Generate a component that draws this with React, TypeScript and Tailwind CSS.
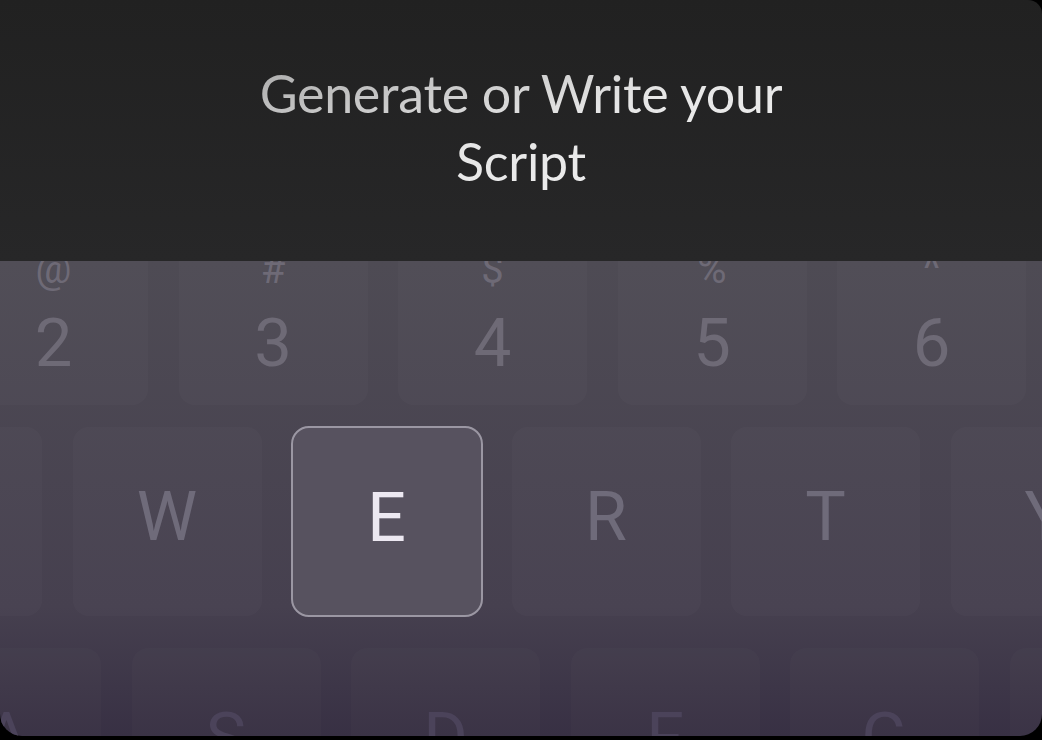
import React from 'react'

const row1 = [
    { sym: '@', num: '2' },
    { sym: '#', num: '3' },
    { sym: '$', num: '4' },
    { sym: '%', num: '5' },
    { sym: '^', num: '6' },
]
const row2 = ['Q', 'W', 'E', 'R', 'T', 'Y']
const row3 = ['A', 'S', 'D', 'F', 'G', 'H']

export default function App() {
    return (
        <div className="w-[1042px] h-[740px] bg-black">
            <div className="h-[736px] flex flex-col overflow-hidden rounded-b-[22px] rounded-tr-[14px]">
                {/* title */}
                <div className="h-[261px] shrink-0 flex items-center justify-center bg-linear-to-b from-[#212121] to-[#272728] relative z-10">
                    <h1
                        className="text-center text-[52px] leading-[68px] font-normal tracking-[-0.3px] pb-[8px] bg-linear-to-br from-[#a9a9a9] via-[#e6e6e6] to-[#f2f2f2] bg-clip-text text-transparent"
                        style={{ fontFamily: 'Lato, "Open Sans", sans-serif' }}
                    >
                        Generate or Write your
                        <br />
                        Script
                    </h1>
                </div>

                {/* keyboard */}
                <div
                    className="flex-1 flex flex-col bg-linear-to-b from-[#4e4b54] via-[#46404f] via-60% to-[#2d243b]"
                    style={{ fontFamily: 'Roboto, "Noto Sans", sans-serif' }}
                >
                    <div className="flex gap-[30.5px] ml-[-41px] mt-[-45px]">
                        {row1.map((k) => (
                            <div key={k.num} className="w-[189px] h-[189px] shrink-0 rounded-[16px] bg-white/[0.018] flex flex-col items-center pt-[32px] text-[#6e6a76]">
                                <span className="text-[40px] leading-[44px]">{k.sym}</span>
                                <span className="text-[67px] leading-[70px] mt-[16px]">{k.num}</span>
                            </div>
                        ))}
                    </div>

                    <div className="flex gap-[30.5px] ml-[-147px] mt-[22px]">
                        {row2.map((l) =>
                            l === 'E' ? (
                                <div key={l} className="w-[192px] h-[191px] -mx-[1.5px] -my-[1px] shrink-0 rounded-[18px] bg-[#57525f] border-2 border-[#9b97a3] flex items-center justify-center pb-[8px] text-[#ece8f1] text-[68px] leading-none">
                                    {l}
                                </div>
                            ) : (
                                <div key={l} className="w-[189px] h-[189px] shrink-0 rounded-[16px] bg-white/[0.018] flex items-center justify-center pb-[10px] text-[#6f6b7a] text-[68px] leading-none">
                                    {l}
                                </div>
                            )
                        )}
                    </div>

                    <div className="flex gap-[30.5px] ml-[-88px] mt-[32px]">
                        {row3.map((l) => (
                            <div key={l} className="w-[189px] h-[189px] shrink-0 rounded-[16px] bg-white/[0.015] flex items-center justify-center pb-[10px] text-[#4b435a] text-[68px] leading-none">
                                {l}
                            </div>
                        ))}
                    </div>
                </div>
            </div>
        </div>
    )
}
